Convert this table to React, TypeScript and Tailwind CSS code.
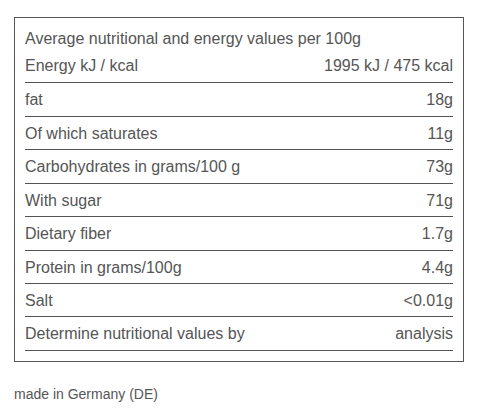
const rows = [
  { label: "fat", value: "18g", h: "h-[34px]" },
  { label: "Of which saturates", value: "11g", h: "h-[33px]" },
  { label: "Carbohydrates in grams/100 g", value: "73g", h: "h-[34px]" },
  { label: "With sugar", value: "71g", h: "h-[33px]" },
  { label: "Dietary fiber", value: "1.7g", h: "h-[34px]" },
  { label: "Protein in grams/100g", value: "4.4g", h: "h-[33px]" },
  { label: "Salt", value: "<0.01g", h: "h-[33px]" },
  { label: "Determine nutritional values by", value: "analysis", h: "h-[34px]" },
];

export default function App() {
  return (
    <div className="h-[417px] w-[485px] bg-white font-['Liberation_Sans',Arial,sans-serif] text-[#555]">
      <div className="h-[17px]" />
      <div className="ml-[14px] w-[450px] border border-[#555] px-[10px] pb-[10px]">
        <div className="border-b border-[#555] pb-[3px] pt-[7px] text-[16px] leading-[27px]">
          <div>Average nutritional and energy values per 100g</div>
          <div className="flex justify-between">
            <span>Energy kJ / kcal</span>
            <span>1995 kJ / 475 kcal</span>
          </div>
        </div>
        {rows.map((r) => (
          <div
            key={r.label}
            className={`flex items-center justify-between border-b border-[#555] pt-[1px] text-[16px] ${r.h}`}
          >
            <span>{r.label}</span>
            <span>{r.value}</span>
          </div>
        ))}
      </div>
      <div className="ml-[14px] mt-[22px] text-[14px] leading-[20px]">made in Germany (DE)</div>
    </div>
  );
}
